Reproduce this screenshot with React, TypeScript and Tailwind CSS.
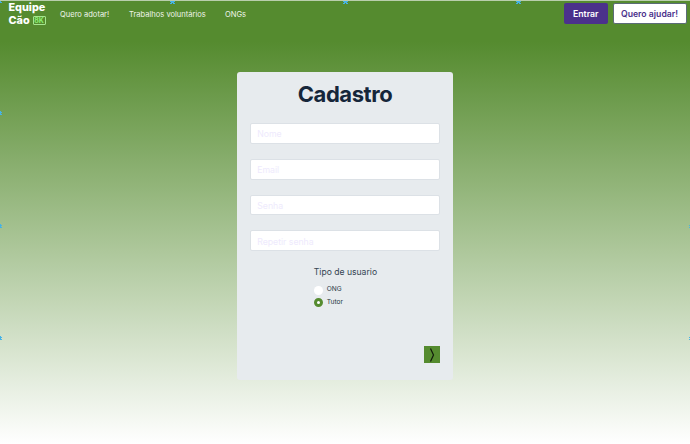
import React from "react";

const fields = [
  { label: "Nome", type: "text" },
  { label: "Email", type: "email" },
  { label: "Senha", type: "password" },
  { label: "Repetir senha", type: "password" },
];

function Handle({ className }: { className: string }) {
  return (
    <svg className={`absolute ${className}`} width="5" height="5" viewBox="0 0 5 5" aria-hidden="true">
      <path d="M1 0h3v1H1zM0 1h5v1H0zM1 2h3v1H1zM0 3h2v1H0zM3 3h2v1H3z" fill="#45b3e7" />
    </svg>
  );
}

function Header() {
  return (
    <header className="flex h-[25px] items-center">
      <a className="mt-[2px] ml-[8.5px] w-[51.5px] text-[10.8px] leading-[12.5px] font-extrabold text-white">
        Equipe
        <span className="flex items-center">
          Cão
          <span className="ml-[3px] flex h-[9px] w-[13px] items-center justify-center rounded-[1px] border border-[#a5e58e] text-[7px] leading-none font-bold text-[#8cf072]">
            8K
          </span>
        </span>
      </a>
      <nav className="flex pt-[2px] text-[7.55px] text-[#eef4e9]">
        <a className="w-[69px]">Quero adotar!</a>
        <a className="w-[96px] whitespace-nowrap">Trabalhos voluntários</a>
        <a>ONGs</a>
      </nav>
      <div className="mr-[3.5px] ml-auto flex gap-[5px] text-[8.7px] font-semibold">
        <button className="h-[21px] w-[43.5px] rounded-[2px] bg-[#4b318b] pt-[2px] text-white">Entrar</button>
        <button className="h-[21px] w-[74px] rounded-[2px] border border-[#5b6b77] bg-white pt-[2px] whitespace-nowrap text-[#4b318b]">
          Quero ajudar!
        </button>
      </div>
    </header>
  );
}

function Radio({ label, checked }: { label: string; checked?: boolean }) {
  return (
    <label className="flex h-[12.5px] items-center gap-[4px] text-[6.6px] text-[#263541]">
      <input
        type="radio"
        name="tipo"
        defaultChecked={checked}
        className="m-0 size-[9px] appearance-none rounded-full bg-white checked:border-[3px] checked:border-[#558b2f]"
      />
      {label}
    </label>
  );
}

export default function App() {
  return (
    <div className="relative h-[444px] w-[690px] overflow-hidden border-t border-[#b9ceac] bg-[linear-gradient(to_bottom,#558b2f_42px,#ffffff_444px)] bg-origin-border font-['Inter',sans-serif]">
      <Header />
      <main className="mx-auto mt-[46px] h-[308px] w-[216.5px] rounded-[3px] bg-[#e7ebee] px-[13px] pt-2">
        <h1 className="text-center text-[22px] leading-7 font-bold tracking-[-0.45px] text-[#16263a]">Cadastro</h1>
        <form onSubmit={(e) => e.preventDefault()}>
          <div className="mt-[15px] flex flex-col gap-[15px]">
            {fields.map((f) => (
              <input
                key={f.label}
                type={f.type}
                placeholder={f.label}
                className="block h-[20.8px] w-full rounded-[2px] border border-[#dce1e6] bg-white px-[6.5px] pt-[1.5px] text-[8.7px] placeholder:text-[#eeeafd]"
              />
            ))}
          </div>
          <fieldset className="mt-[15px] ml-[64px]">
            <legend className="mb-[5px] text-[8.6px] leading-[13px] text-[#344452]">Tipo de usuario</legend>
            <Radio label="ONG" />
            <Radio label="Tutor" checked />
          </fieldset>
          <button className="mt-[37px] ml-auto flex h-[17px] w-4 items-center justify-center bg-[#558b2f]" aria-label="Avançar">
            <svg width="6" height="14" viewBox="0 0 6 14" fill="none" stroke="#111b0b" strokeWidth="1.2">
              <path d="M1.5 .5 4.5 7 1.5 13.5" />
            </svg>
          </button>
        </form>
      </main>
      <Handle className="-top-[2px] -left-[3px]" />
      <Handle className="-top-px left-[170px]" />
      <Handle className="-top-px left-[343px]" />
      <Handle className="-top-px left-[516px]" />
      <Handle className="top-[110px] -left-[3px]" />
      <Handle className="top-[223px] -left-[3px]" />
      <Handle className="top-[335px] -left-[3px]" />
      <Handle className="top-[223px] left-[689px]" />
      <Handle className="top-[335px] left-[689px]" />
    </div>
  );
}
